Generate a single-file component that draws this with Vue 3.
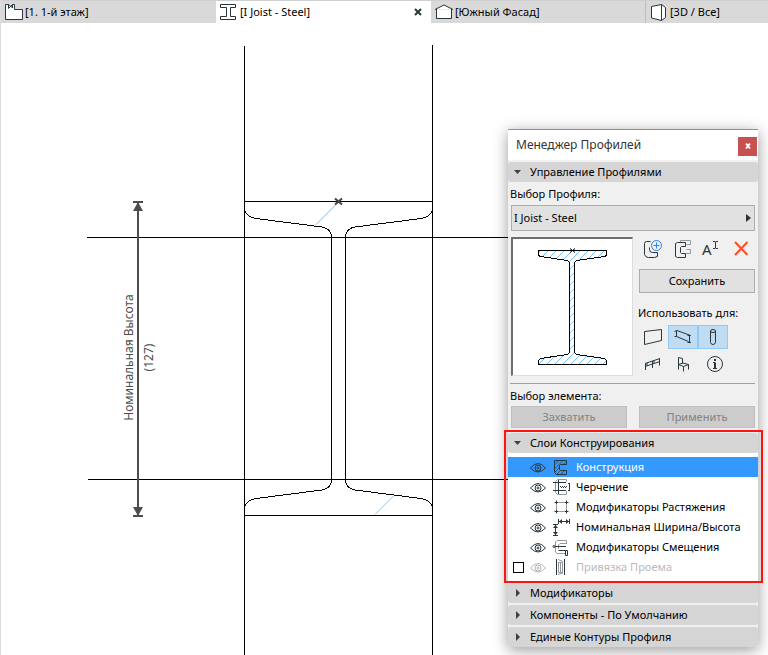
<script setup>
import { ref } from 'vue'

const tabs = [
  { id: 'plan', label: '[1. 1-й этаж]' },
  { id: 'profile', label: '[I Joist - Steel]' },
  { id: 'elevation', label: '[Южный Фасад]' },
  { id: 'view3d', label: '[3D / Все]' },
]
const activeTab = ref('profile')

const profile = ref('I Joist - Steel')

const layers = ref([
  { id: 'construction', label: 'Конструкция', enabled: true },
  { id: 'drafting', label: 'Черчение', enabled: true },
  { id: 'stretch', label: 'Модификаторы Растяжения', enabled: true },
  { id: 'nominal', label: 'Номинальная Ширина/Высота', enabled: true },
  { id: 'offset', label: 'Модификаторы Смещения', enabled: true },
  { id: 'opening', label: 'Привязка Проема', enabled: false, optional: true },
])
const activeLayer = ref('construction')

const uses = ref([
  { id: 'wall', title: 'Стена', on: false },
  { id: 'beam', title: 'Балка', on: true },
  { id: 'column', title: 'Колонна', on: true },
  { id: 'railing', title: 'Ограждение', on: false },
  { id: 'object', title: 'Объект', on: false },
  { id: 'info', title: 'Информация', on: false },
])

const collapsed = ['Модификаторы', 'Компоненты - По Умолчанию', 'Единые Контуры Профиля']

// Preview outline and its 45° hatching, clipped to the outline
const outline =
  'M25.5 11.5H93.500V16.500L91.500 17.500L63.500 21.500L61.500 23.500V113.500L63.500 115.500L91.500 119.500L93.500 121.500V125.500H25.500V121.500L27.500 119.500L54.500 115.500L56.500 113.500V23.500L54.500 21.500L27.500 17.500L25.500 16.500Z'
const hatch = Array.from({ length: 24 }, (_, i) => 39 + i * 8)
  .map((sum) => `M${sum} 0L${sum - 136} 136`)
  .join('')
</script>

<template>
  <div class="workspace">
    <nav class="tabs">
      <div v-for="tab in tabs" :key="tab.id" class="tab" :class="[tab.id, { active: tab.id === activeTab }]">
        <button type="button" class="tab-open" @click="activeTab = tab.id">
          <svg class="tab-icon" viewBox="0 0 20 18">
            <path v-if="tab.id === 'plan'" d="M1.500 1.500H5L8.500 5V1.500H10.500V6.500H18.500V16.500H1.500ZM4.500 1.500V5.500L8.500 1.500" />
            <path v-if="tab.id === 'profile'" d="M1.500 1.500H16.500V4.500H11.500V13.500H16.500V16.500H1.500V13.500H7.500V4.500H1.500Z" />
            <path v-if="tab.id === 'elevation'" d="M1 6.500L10 2L19 6.500M2.500 6V15.500H17.500V6" />
            <path v-if="tab.id === 'view3d'" d="M2.500 3.500L12.500 1.500V17.500L2.500 15ZM12.500 1.500L16.500 4.500V14.500L12.500 17.500" />
          </svg>
          <span>{{ tab.label }}</span>
        </button>
        <button v-if="tab.id === activeTab" type="button" class="tab-close" aria-label="Закрыть">
          <svg viewBox="0 0 8 8"><path d="M1 1L7 7M7 1L1 7" /></svg>
        </button>
      </div>
    </nav>

    <main class="canvas">
      <svg class="drawing">
        <g class="ink">
          <path d="M244.500 23V640M432.500 22V640M87 214.500H520M88 456.500H520" />
          <path d="M244.500 178.500H432.500M244.500 492.500H432.500" />
          <path d="M244.500 187C246 192 249 194.500 256 195.500L322 204Q331.500 205.500 331.500 214.500V456.500Q331.500 465.500 322 467L256 475.500C249 476.500 246 479 244.500 484" />
          <path d="M432.500 187C431 192 428 194.500 421 195.500L355 204Q345.500 205.500 345.500 214.500V456.500Q345.500 465.500 355 467L421 475.500C428 476.500 431 479 432.500 484" />
        </g>
        <path class="fill-hint" d="M338 179.500L315 202.500" />
        <path class="fill-hint pale" d="M375 491.500L394 472.500" />
        <path class="origin" d="M335 175.500L342 181.500M342 175.500L335 181.500" />
        <g class="dimension">
          <path d="M138 180V493" />
          <path d="M133 179H143M133 493H143" />
          <path class="head" d="M138 179L143 188H133ZM138 493L143 484H133Z" />
          <text transform="translate(133 334.500) rotate(-90)">Номинальная Высота</text>
          <text transform="translate(153 334.500) rotate(-90)">(127)</text>
        </g>
      </svg>
    </main>

    <aside class="palette">
      <header class="titlebar">
        <h1>Менеджер Профилей</h1>
        <button type="button" class="close" aria-label="Закрыть">
          <svg viewBox="0 0 8 8"><path d="M2 1.500L6 6.500M6 1.500L2 6.500" /></svg>
        </button>
      </header>

      <button type="button" class="section">
        <svg viewBox="0 0 11 10"><path d="M1 3H8L4.500 7Z" /></svg>Управление Профилями
      </button>

      <section class="manage">
        <label for="profile" class="caption">Выбор Профиля:</label>
        <div class="picker">
          <select id="profile" v-model="profile">
            <option>I Joist - Steel</option>
          </select>
          <svg class="picker-arrow" viewBox="0 0 5 8"><path d="M0 0L5 4L0 8Z" /></svg>
        </div>

        <div class="editor">
          <div class="preview">
            <svg viewBox="0 0 119 136">
              <clipPath id="beam-area"><path :d="outline" /></clipPath>
              <g clip-path="url(#beam-area)"><path class="hatch" :d="hatch" /></g>
              <path class="beam" :d="outline" />
              <path class="mark" d="M57 9.500L62 13.500M62 9.500L57 13.500" />
            </svg>
          </div>

          <div class="tools">
            <div class="actions">
              <button type="button" title="Новый профиль">
                <svg class="icon" viewBox="0 0 20 20">
                  <path d="M7.500 2.500H3.500Q1.500 2.500 1.500 4.500V15.500Q2.500 18.500 5.500 18.500H11.500L14.500 17.500V13.500H9.500Q6.500 13.500 6.500 10.500V8.500" />
                  <circle class="blue" cx="13.500" cy="6.500" r="5" />
                  <path class="blue" d="M13.500 3.500V9.500M10.500 6.500H16.500" />
                </svg>
              </button>
              <button type="button" title="Дублировать профиль">
                <svg class="icon" viewBox="0 0 20 20">
                  <path class="dim" d="M8.500 3V1.500H18.500V5.500H14.500M14.500 10.500H18.500V14.500H14" />
                  <path d="M13.500 3.500H5.500L3.500 4.500V17.500L5.500 18.500H13.500V14.500H9.500L8.500 13.500V8.500L9.500 7.500H13.500Z" />
                </svg>
              </button>
              <button type="button" title="Переименовать">
                <svg class="icon" viewBox="0 0 20 20">
                  <text x="1" y="16">A</text>
                  <path d="M12 2.500H14L14.500 3L15 2.500H17M12 9.500H14L14.500 9L15 9.500H17M14.500 3V9" />
                </svg>
              </button>
              <button type="button" title="Удалить">
                <svg class="icon" viewBox="0 0 20 20"><path class="red" d="M5 3L17.500 16M17.500 3L5 16" /></svg>
              </button>
            </div>
            <button type="button" class="button">Сохранить</button>
            <p class="caption use-caption">Использовать для:</p>
            <div class="uses">
              <button
                v-for="use in uses"
                :key="use.id"
                type="button"
                class="use"
                :class="{ on: use.on }"
                :title="use.title"
                :aria-pressed="use.on"
                @click="use.on = !use.on"
              >
                <svg class="icon" viewBox="0 0 20 20">
                  <path v-if="use.id === 'wall'" d="M1.500 4.500L18.500 2.500V13.500L1.500 17.500Z" />
                  <path v-if="use.id === 'beam'" d="M1.500 4.500L4 3.500L17.500 8.500M3.500 4V9.500L15.500 14.500M1.500 9.500H3.500M17.500 8.500H14.500M16.500 9V15M14.500 15.500H18" />
                  <template v-if="use.id === 'column'">
                    <path d="M7.500 4V15.500Q8 17.500 10 17.500Q12 17.500 12.500 15.500V4Q12.500 2.500 10 2.500Q7.500 2.500 7.500 4Q7.500 5.500 10 5.500Q12.500 5.500 12.500 4" />
                  </template>
                  <path v-if="use.id === 'railing'" d="M2 9.500L17 4.500M2 12.500L17 7.500M2.500 9.500V16M9.500 7V14M16.500 4.500V11.500M4 9V12M11 6.500V9.500" />
                  <path v-if="use.id === 'object'" d="M5.500 3.500L9.500 4.500V9.500M5.500 3.500V15.500M5.500 10.500L10 9L15.500 10.500L10.500 12.500ZM10.500 12.500V17.500M15.500 10.500V15.500" />
                  <template v-if="use.id === 'info'">
                    <circle cx="12" cy="10" r="7.500" />
                    <path class="bold" d="M12 8.500V14.500M12 5V7" />
                    <path d="M10 8.500H12M10 14.500H14" />
                  </template>
                </svg>
              </button>
            </div>
          </div>
        </div>

        <hr />
        <p class="caption">Выбор элемента:</p>
        <div class="pair">
          <button type="button" class="button" disabled>Захватить</button>
          <button type="button" class="button" disabled>Применить</button>
        </div>
      </section>

      <section class="layers">
        <button type="button" class="section">
          <svg viewBox="0 0 11 10"><path d="M1 3H8L4.500 7Z" /></svg>Слои Конструирования
        </button>
        <ul>
          <li
            v-for="layer in layers"
            :key="layer.id"
            :class="{ selected: layer.id === activeLayer, disabled: !layer.enabled }"
            @click="activeLayer = layer.id"
          >
            <input v-if="layer.optional" v-model="layer.enabled" type="checkbox" :aria-label="layer.label" />
            <span v-else class="no-check"></span>
            <svg class="eye" viewBox="0 0 16 14">
              <path d="M.5 8Q8 -1 15.500 8Q8 16 .5 8Z" />
              <circle cx="8" cy="8" r="3" /><circle cx="8" cy="8" r="1" />
            </svg>
            <svg class="layer-icon" viewBox="0 0 18 18">
              <template v-if="layer.id === 'construction'">
                <path d="M2.500 2.500H14.500V6.500H8.500L7.500 7.500V11.500L8.500 12.500H14.500V16.500H4.500L2.500 14.500Z" />
                <path class="fine" d="M3 6.500L7 2.500M3 10.500L7.500 6M3 14L7.500 9.500M4.500 16.500L8.500 12.500M8.500 16.500L12 13M7.500 6L11 2.500M11.500 6L14 3.500" />
              </template>
              <template v-if="layer.id === 'drafting'">
                <path class="dim" d="M14.500 4V1.500H5.500L3.500 3.500V14.500L5.500 16.500H14.500V13" />
                <path d="M1 4.500H14M1 12.500H14M6.500 2V16M17.500 5V12M16 5.500H18M16 12.500H18" />
                <path class="dots" d="M8 8.500H15M9 9.500H14" />
              </template>
              <template v-if="layer.id === 'stretch'">
                <path class="dots" d="M4.500 4.500H14.500V13.500H4.500Z" />
                <path d="M2.500 4.500H6M4.500 2.500V6M13 4.500H16.500M14.500 2.500V6M2.500 13.500H6M4.500 12V15.500M13 13.500H16.500M14.500 12V15.500" />
              </template>
              <template v-if="layer.id === 'nominal'">
                <path d="M6.500 1V6M17.500 1V6M7 3.500H17M1 6.500H6M1 17.500H6M3.500 7V17" />
                <path class="solid" d="M7 3.500L10 1V6ZM17 3.500L14 1V6ZM3.500 7L1 10H6ZM3.500 17L1 14H6Z" />
              </template>
              <template v-if="layer.id === 'offset'">
                <path class="dim" d="M14.500 6V2.500H5L3.500 4V14L5 15.500H13M14.500 5.500H8L6.500 7V11" />
                <path d="M3 8.500H14M6.500 12.500H15.500V17.500H13.500V13" />
                <circle cx="2" cy="8.500" r="1" />
              </template>
              <template v-if="layer.id === 'opening'">
                <path d="M4.500 1V17M12.500 1V17" />
                <path class="dim" d="M6.500 4.500H10.500V14.500H6.500ZM6 1.500L11 3.500M6 16.500L11 15M8.500 5V14" />
              </template>
            </svg>
            <span>{{ layer.label }}</span>
          </li>
        </ul>
      </section>

      <button v-for="name in collapsed" :key="name" type="button" class="section closed">
        <svg viewBox="0 0 11 10"><path d="M3 1L7 5L3 9Z" /></svg>{{ name }}
      </button>
    </aside>
  </div>
</template>

<style>
body {
  margin: 0;
  background: #fff;
}
</style>

<style scoped>
* {
  box-sizing: border-box;
}
.workspace {
  position: relative;
  display: flex;
  flex-direction: column;
  min-height: 100vh;
  overflow: hidden;
  border-left: 1px solid #dcdcdc;
  font: 11px/16px "Noto Sans", "Open Sans", sans-serif;
  color: #000;
}
button,
select {
  margin: 0;
  padding: 0;
  border: 0;
  border-radius: 0;
  background: none;
  font: inherit;
  color: inherit;
}
svg {
  display: block;
  flex: none;
  fill: none;
  stroke: #2b363c;
}

/* tabs */
.tabs {
  display: flex;
  height: 23px;
  border-top: 1px solid #d0d0d0;
  background: #d9d9d9;
  overflow: hidden;
}
.tab {
  flex: 0 0 215px;
  display: flex;
  align-items: center;
  justify-content: space-between;
  padding: 0 9px 0 3px;
}
.tab.elevation {
  border-right: 1px solid #bdbdbd;
}
.tab.active {
  background: #fff;
}
.tab-open {
  display: flex;
  align-items: center;
  gap: 1px;
}
.tab-icon {
  width: 20px;
  height: 18px;
}
.tab-icon path {
  fill: #fff;
}
.tab-close svg {
  width: 8px;
  height: 8px;
  stroke-width: 2;
}

/* canvas */
.canvas {
  flex: 1;
  display: flex;
  margin-left: -1px;
}
.drawing {
  flex: 1;
  width: 100%;
}
.ink {
  stroke: #000;
  shape-rendering: crispEdges;
}
.fill-hint {
  stroke: #74b9f8;
}
.pale {
  stroke: #93c4e4;
}
.origin {
  stroke: #444;
  stroke-width: 2;
}
.dimension {
  stroke: #4d4d4d;
  stroke-width: 2;
}
.head {
  fill: #4d4d4d;
  stroke: none;
}
.dimension text {
  fill: #4d4d4d;
  stroke: none;
  font-size: 12px;
  text-anchor: middle;
}

/* palette */
.palette {
  position: absolute;
  top: 129px;
  right: 10px;
  width: 250px;
  border-top: 1px solid #8096a8;
  background: #f0f0f0;
  box-shadow: 0 3px 14px rgba(0, 0, 0, 0.4);
}
.titlebar {
  display: flex;
  align-items: center;
  justify-content: space-between;
  height: 30px;
  margin-bottom: 2px;
  padding: 2px 1px 0 8px;
  background: #fff;
}
h1 {
  margin: 0;
  padding-bottom: 2px;
  font-size: 12px;
  font-weight: 400;
  color: #333;
}
.close {
  display: flex;
  align-items: center;
  justify-content: center;
  width: 19px;
  height: 19px;
  background: #c75050;
}
.close svg {
  width: 8px;
  height: 8px;
  stroke: #fff;
  stroke-width: 2;
}
.section {
  display: flex;
  align-items: center;
  gap: 6px;
  width: 100%;
  height: 20px;
  padding-left: 5px;
  border-radius: 3px;
  background: #d5d5d5;
}
.section svg {
  width: 11px;
  height: 10px;
  fill: #404040;
  stroke: none;
}
.manage {
  padding: 4px 3px 5px 2px;
}
.caption {
  display: block;
  margin: 0;
}
.picker {
  position: relative;
  margin: 3px 0 0 1px;
}
select {
  appearance: none;
  display: block;
  width: 100%;
  height: 26px;
  padding-left: 2px;
  border: 1px solid #adadad;
  background: #e1e1e1;
}
.picker-arrow {
  position: absolute;
  top: 9px;
  right: 4px;
  width: 5px;
  height: 8px;
  fill: #333;
  stroke: none;
}
.editor {
  display: flex;
  gap: 5px;
  margin: 6px 0 0 1px;
}
.preview {
  flex: none;
  width: 122px;
  height: 139px;
  border: 2px solid #6e6e6e;
  border-right: 1px solid #dcdcdc;
  border-bottom: 1px solid #dcdcdc;
  background: #fff;
}
.preview svg {
  width: 119px;
  height: 136px;
}
.hatch {
  stroke: #79bdfa;
}
.beam {
  stroke: #000;
  shape-rendering: crispEdges;
}
.mark {
  stroke: #000;
}
.tools {
  flex: 1;
  display: flex;
  flex-direction: column;
}
.actions {
  display: flex;
  height: 24px;
}
.actions button {
  flex: 0 0 29px;
  display: flex;
  align-items: center;
  justify-content: center;
}
.icon {
  width: 20px;
  height: 20px;
}
.icon text {
  fill: #2b363c;
  stroke: none;
  font-size: 15px;
}
.blue {
  stroke: #2a83ee;
}
.dim {
  stroke: #96999b;
}
.fine {
  stroke-opacity: 0.7;
}
.red {
  stroke: #ff4b21;
  stroke-width: 2;
}
.bold {
  stroke-width: 2;
}
.button {
  height: 24px;
  border: 1px solid #adadad;
  background: #e1e1e1;
}
.tools .button {
  margin: 8px 0 0 1px;
}
.button:disabled {
  height: 22px;
  border-color: #bfbfbf;
  background: #cccccc;
  color: #838383;
}
.use-caption {
  margin: 12px 0 4px;
}
.uses {
  display: grid;
  grid-template-columns: repeat(3, 30px);
  row-gap: 3px;
}
.use {
  display: flex;
  align-items: center;
  justify-content: center;
  height: 24px;
}
.use.on {
  border: 1px solid #90c8f6;
  background: #c0dcf3;
}
hr {
  margin: 7px 0 4px;
  border: 0;
  border-top: 1px solid #a0a0a0;
}
.pair {
  display: grid;
  grid-template-columns: 1fr 1fr;
  gap: 12px;
  margin: 2px 0 0 1px;
}

/* layer list */
.layers {
  position: relative;
  padding-bottom: 1px;
}
.layers::after {
  content: "";
  position: absolute;
  inset: -3px -5px 0 -4px;
  border: 2px solid #ff1414;
  pointer-events: none;
}
ul {
  margin: 0;
  padding: 4px 0 5px;
  background: #fff;
  list-style: none;
}
li {
  display: flex;
  align-items: center;
  gap: 6px;
  height: 20px;
  padding-left: 5px;
}
li.selected {
  background: #3399ff;
  color: #fff;
}
li.disabled {
  color: #bababa;
}
li.disabled .eye {
  stroke: #b5b5b5;
}
li input {
  appearance: none;
  width: 11px;
  height: 11px;
  margin: 0;
  border: 1px solid #000;
  background: #fff;
}
.no-check {
  width: 11px;
}
.eye {
  width: 16px;
  height: 14px;
}
.layer-icon {
  width: 18px;
  height: 18px;
}
.dots {
  stroke-dasharray: 1 1;
}
.solid {
  fill: #2b363c;
  stroke: none;
}
.closed + .closed {
  margin-top: 2px;
}
</style>
